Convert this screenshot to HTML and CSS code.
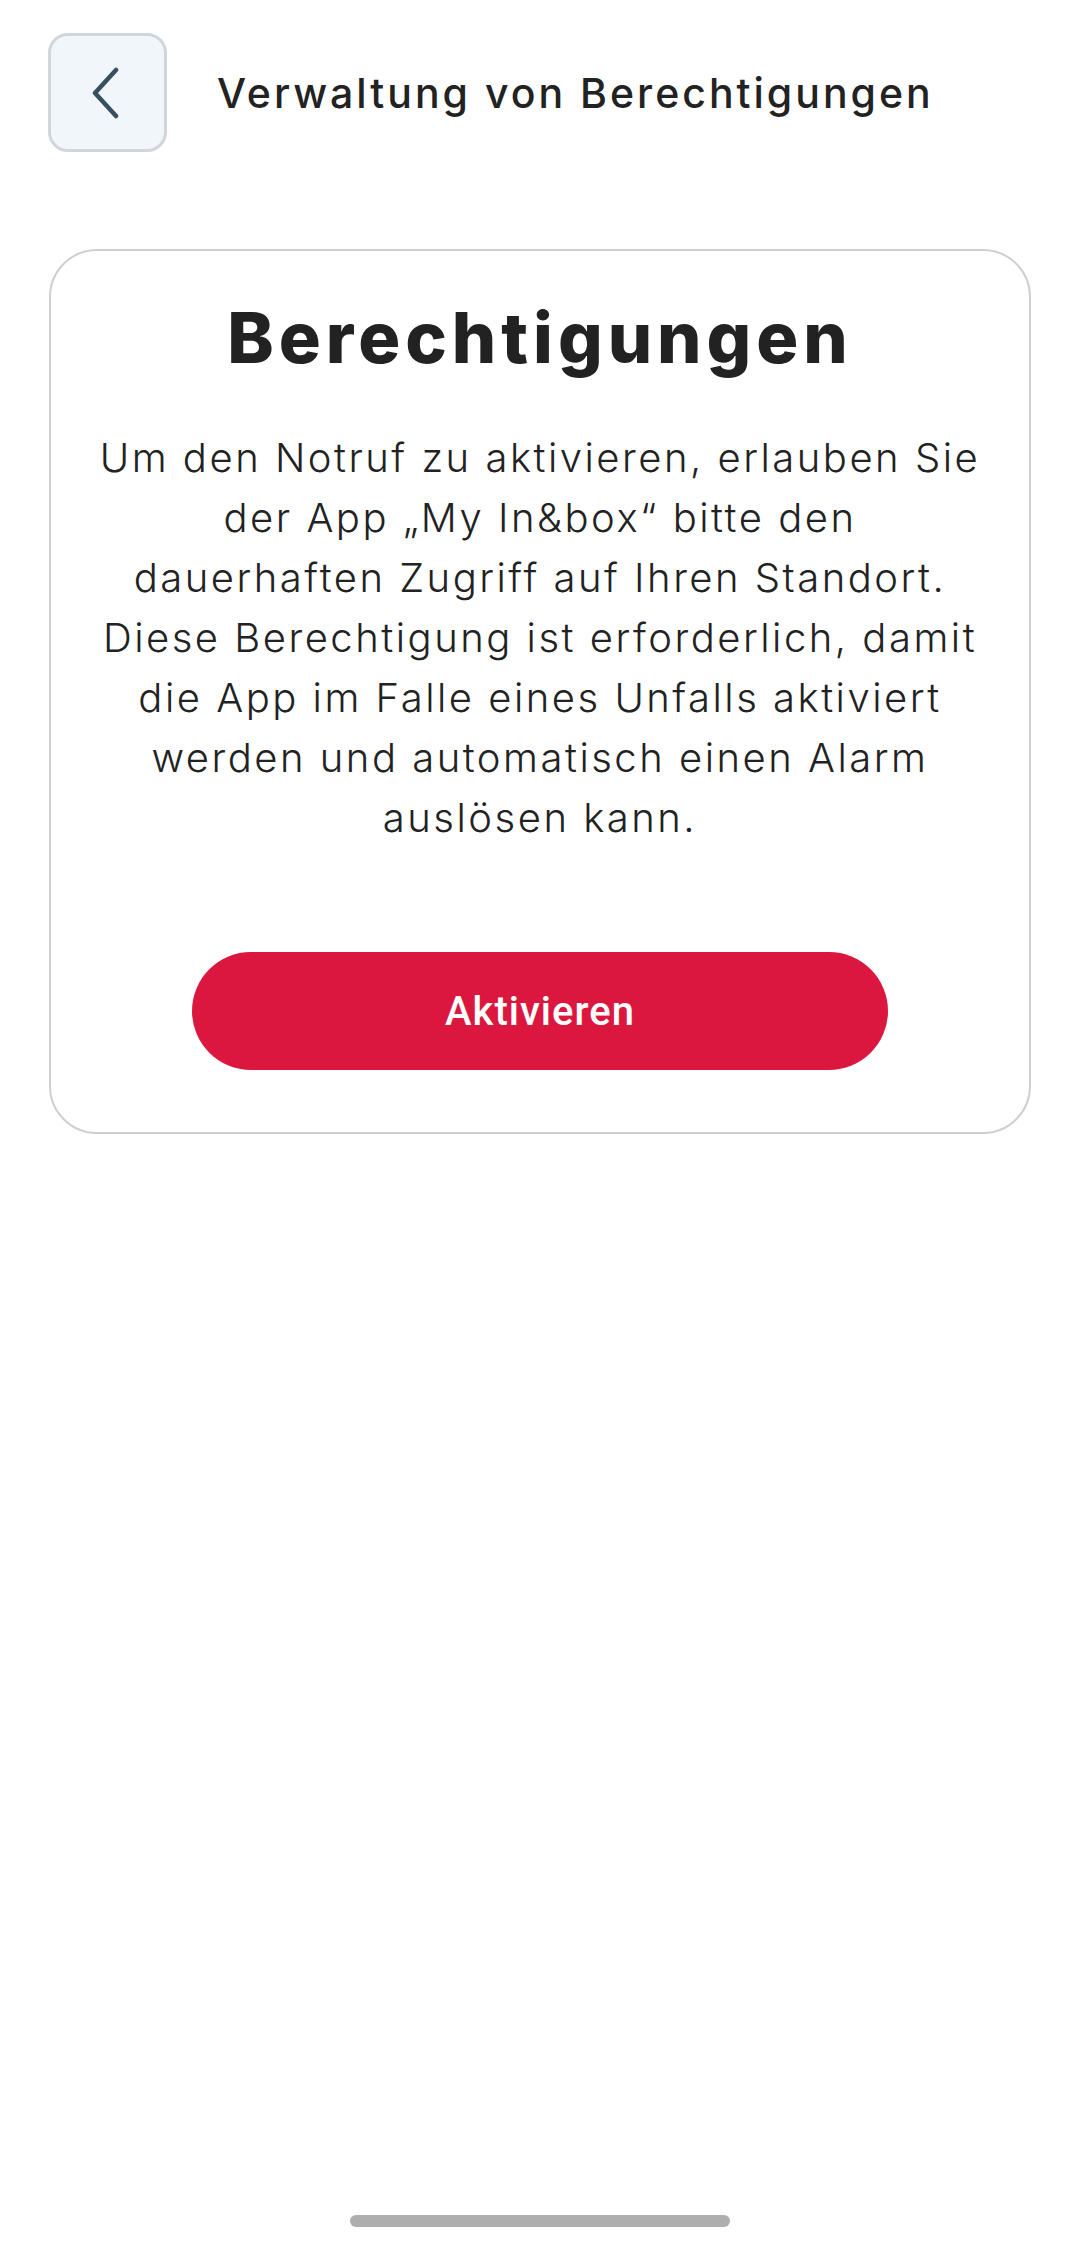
FILE: index.html
```html
<!DOCTYPE html>
<html lang="de">
<head>
    <meta charset="UTF-8">
    <meta name="viewport" content="width=device-width, initial-scale=1.0">
    <title>Verwaltung von Berechtigungen</title>
    <link rel="stylesheet" href="styles.css">
</head>
<body>
<div class="screen">
    <header class="topbar">
        <button class="back-btn" type="button" aria-label="Zurück">
            <svg width="30" height="52" viewBox="0 0 30 52">
                <path d="M26 3 L5 26 L26 49" fill="none" stroke="#37505f" stroke-width="4.5" stroke-linecap="round" stroke-linejoin="round"/>
            </svg>
        </button>
        <h1 class="page-title">Verwaltung von Berechtigungen</h1>
    </header>

    <section class="card">
        <h2 class="card-title">Berechtigungen</h2>
        <p class="card-text">
            Um den Notruf zu aktivieren, erlauben Sie<br>
            der App „My In&amp;box“ bitte den<br>
            dauerhaften Zugriff auf Ihren Standort.<br>
            Diese Berechtigung ist erforderlich, damit<br>
            die App im Falle eines Unfalls aktiviert<br>
            werden und automatisch einen Alarm<br>
            auslösen kann.
        </p>
        <button class="primary-btn" type="button">Aktivieren</button>
    </section>

    <div class="home-bar"></div>
</div>
</body>
</html>
```

FILE: styles.css
```css
html, body {
    margin: 0;
    padding: 0;
    background: #fff;
}

body {
    font-family: "Inter", "DejaVu Sans", sans-serif;
    color: #222;
}

.screen {
    min-height: 2243px;
    display: flex;
    flex-direction: column;
    box-sizing: border-box;
}

.topbar {
    display: flex;
    align-items: center;
    gap: 50px;
    padding: 33px 48px 0;
}

.back-btn {
    width: 119px;
    height: 119px;
    box-sizing: border-box;
    background: #f1f6fa;
    border: 3px solid #d1d6dc;
    border-radius: 20px;
    display: flex;
    align-items: center;
    justify-content: center;
    padding: 0 6px 0 0;
    cursor: pointer;
}

.page-title {
    margin: 0;
    font-size: 41px;
    font-weight: 500;
    color: #222;
    letter-spacing: 3px;
}

.card {
    margin: 97px 49px 0;
    border: 2px solid #cfcfcf;
    border-radius: 48px;
    padding: 42px 10px 62px;
    display: flex;
    flex-direction: column;
    align-items: center;
}

.card-title {
    margin: 0;
    font-size: 70px;
    font-weight: 800;
    line-height: 90px;
    color: #222;
    letter-spacing: 5px;
}

.card-text {
    margin: 45px 0 0;
    font-size: 40px;
    font-weight: 300;
    line-height: 60px;
    text-align: center;
    color: #222;
    letter-spacing: 2.5px;
}

.primary-btn {
    margin-top: 104px;
    width: 696px;
    height: 118px;
    border: none;
    border-radius: 59px;
    background: #dc173f;
    color: #fff;
    font-family: "Roboto", sans-serif;
    font-size: 40px;
    font-weight: 500;
    letter-spacing: 1px;
    cursor: pointer;
}

.home-bar {
    margin: auto auto 16px;
    width: 380px;
    height: 12px;
    border-radius: 6px;
    background: #aeaeae;
}
```
